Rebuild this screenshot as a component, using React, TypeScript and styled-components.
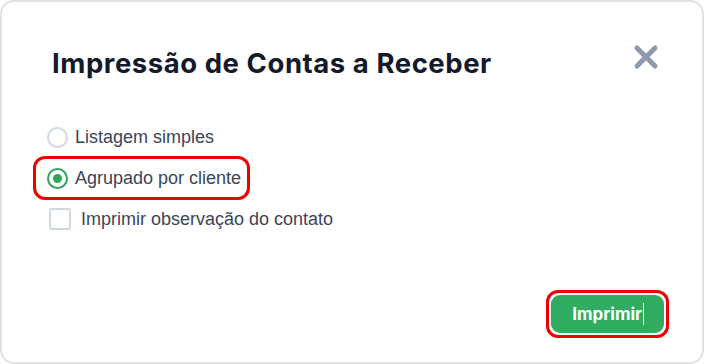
import React from "react"
import styled, { createGlobalStyle } from "styled-components"

const GlobalStyle = createGlobalStyle`
  html, body {
    margin: 0;
    padding: 0;
    background: #ffffff;
  }
`

const Dialog = styled.div`
  box-sizing: border-box;
  width: 704px;
  height: 364px;
  background: #ffffff;
  border: 2px solid #e2e2e2;
  border-radius: 14px;
  display: flex;
  flex-direction: column;
  padding: 0 34px 24px 31px;
`

const Header = styled.div`
  display: flex;
  justify-content: space-between;
  align-items: center;
  padding: 42px 0 0 19px;
  height: 38px;
`

const Title = styled.h1`
  margin: 0;
  font-family: "Inter", "Noto Sans", sans-serif;
  font-weight: 700;
  font-size: 27.5px;
  letter-spacing: 0.55px;
  color: #141a2b;
`

const CloseButton = styled.button`
  border: 0;
  background: none;
  padding: 0;
  margin-right: 8px;
  margin-top: -12px;
  width: 28px;
  height: 28px;
  cursor: pointer;
  display: flex;
  align-items: center;
  justify-content: center;
`

const Options = styled.div`
  display: flex;
  flex-direction: column;
  margin-top: 36px;
`

const OptionRow = styled.label<{ $highlight?: boolean; $indent?: number }>`
  box-sizing: border-box;
  display: flex;
  align-items: center;
  gap: 7px;
  height: ${({ $highlight }) => ($highlight ? "44px" : "38px")};
  width: ${({ $highlight }) => ($highlight ? "217px" : "auto")};
  padding-left: ${({ $indent }) => $indent ?? 0}px;
  border: ${({ $highlight }) => ($highlight ? "3px solid #ee0000" : "none")};
  border-radius: 12px;
  font-family: "Liberation Sans", Arial, sans-serif;
  font-size: 18px;
  color: #3b4558;
`

const Radio = styled.span<{ $checked?: boolean }>`
  box-sizing: border-box;
  width: 21px;
  height: 21px;
  border-radius: 50%;
  border: 2px solid ${({ $checked }) => ($checked ? "#2ea55a" : "#d2d8e2")};
  display: flex;
  align-items: center;
  justify-content: center;

  &::after {
    content: "";
    width: 9px;
    height: 9px;
    border-radius: 50%;
    background: ${({ $checked }) => ($checked ? "#2ea55a" : "transparent")};
  }
`

const Checkbox = styled.span`
  box-sizing: border-box;
  width: 22px;
  height: 22px;
  border-radius: 3px;
  border: 2px solid #d2d8e2;
  margin-right: 3px;
`

const Footer = styled.div`
  margin-top: auto;
  display: flex;
  justify-content: flex-end;
`

const PrintOutline = styled.div`
  border: 3px solid #ee0000;
  border-radius: 12px;
  padding: 2px;
  margin-right: -1px;
`

const PrintButton = styled.button`
  display: flex;
  align-items: center;
  height: 38px;
  padding: 0 20px 0 21px;
  border: 0;
  border-radius: 9px;
  background: #2fac5f;
  color: #ffffff;
  font-family: "Inter", "Noto Sans", sans-serif;
  font-weight: 700;
  font-size: 17px;
  cursor: pointer;
`

const Caret = styled.span`
  display: inline-block;
  width: 1px;
  height: 22px;
  background: #ffffff;
  margin-left: 1px;
`

const App: React.FC = () => (
  <>
    <GlobalStyle />
    <Dialog>
      <Header>
        <Title>Impressão de Contas a Receber</Title>
        <CloseButton aria-label="Fechar">
          <svg width="26" height="26" viewBox="0 0 26 26">
            <path
              d="M4 4 L22 22 M22 4 L4 22"
              stroke="#8e99ab"
              strokeWidth="5"
              strokeLinecap="round"
            />
          </svg>
        </CloseButton>
      </Header>
      <Options>
        <OptionRow $indent={14}>
          <Radio />
          Listagem simples
        </OptionRow>
        <OptionRow $highlight $indent={11}>
          <Radio $checked />
          Agrupado por cliente
        </OptionRow>
        <OptionRow $indent={16}>
          <Checkbox />
          Imprimir observação do contato
        </OptionRow>
      </Options>
      <Footer>
        <PrintOutline>
          <PrintButton>
            Imprimir
            <Caret />
          </PrintButton>
        </PrintOutline>
      </Footer>
    </Dialog>
  </>
)

export default App
